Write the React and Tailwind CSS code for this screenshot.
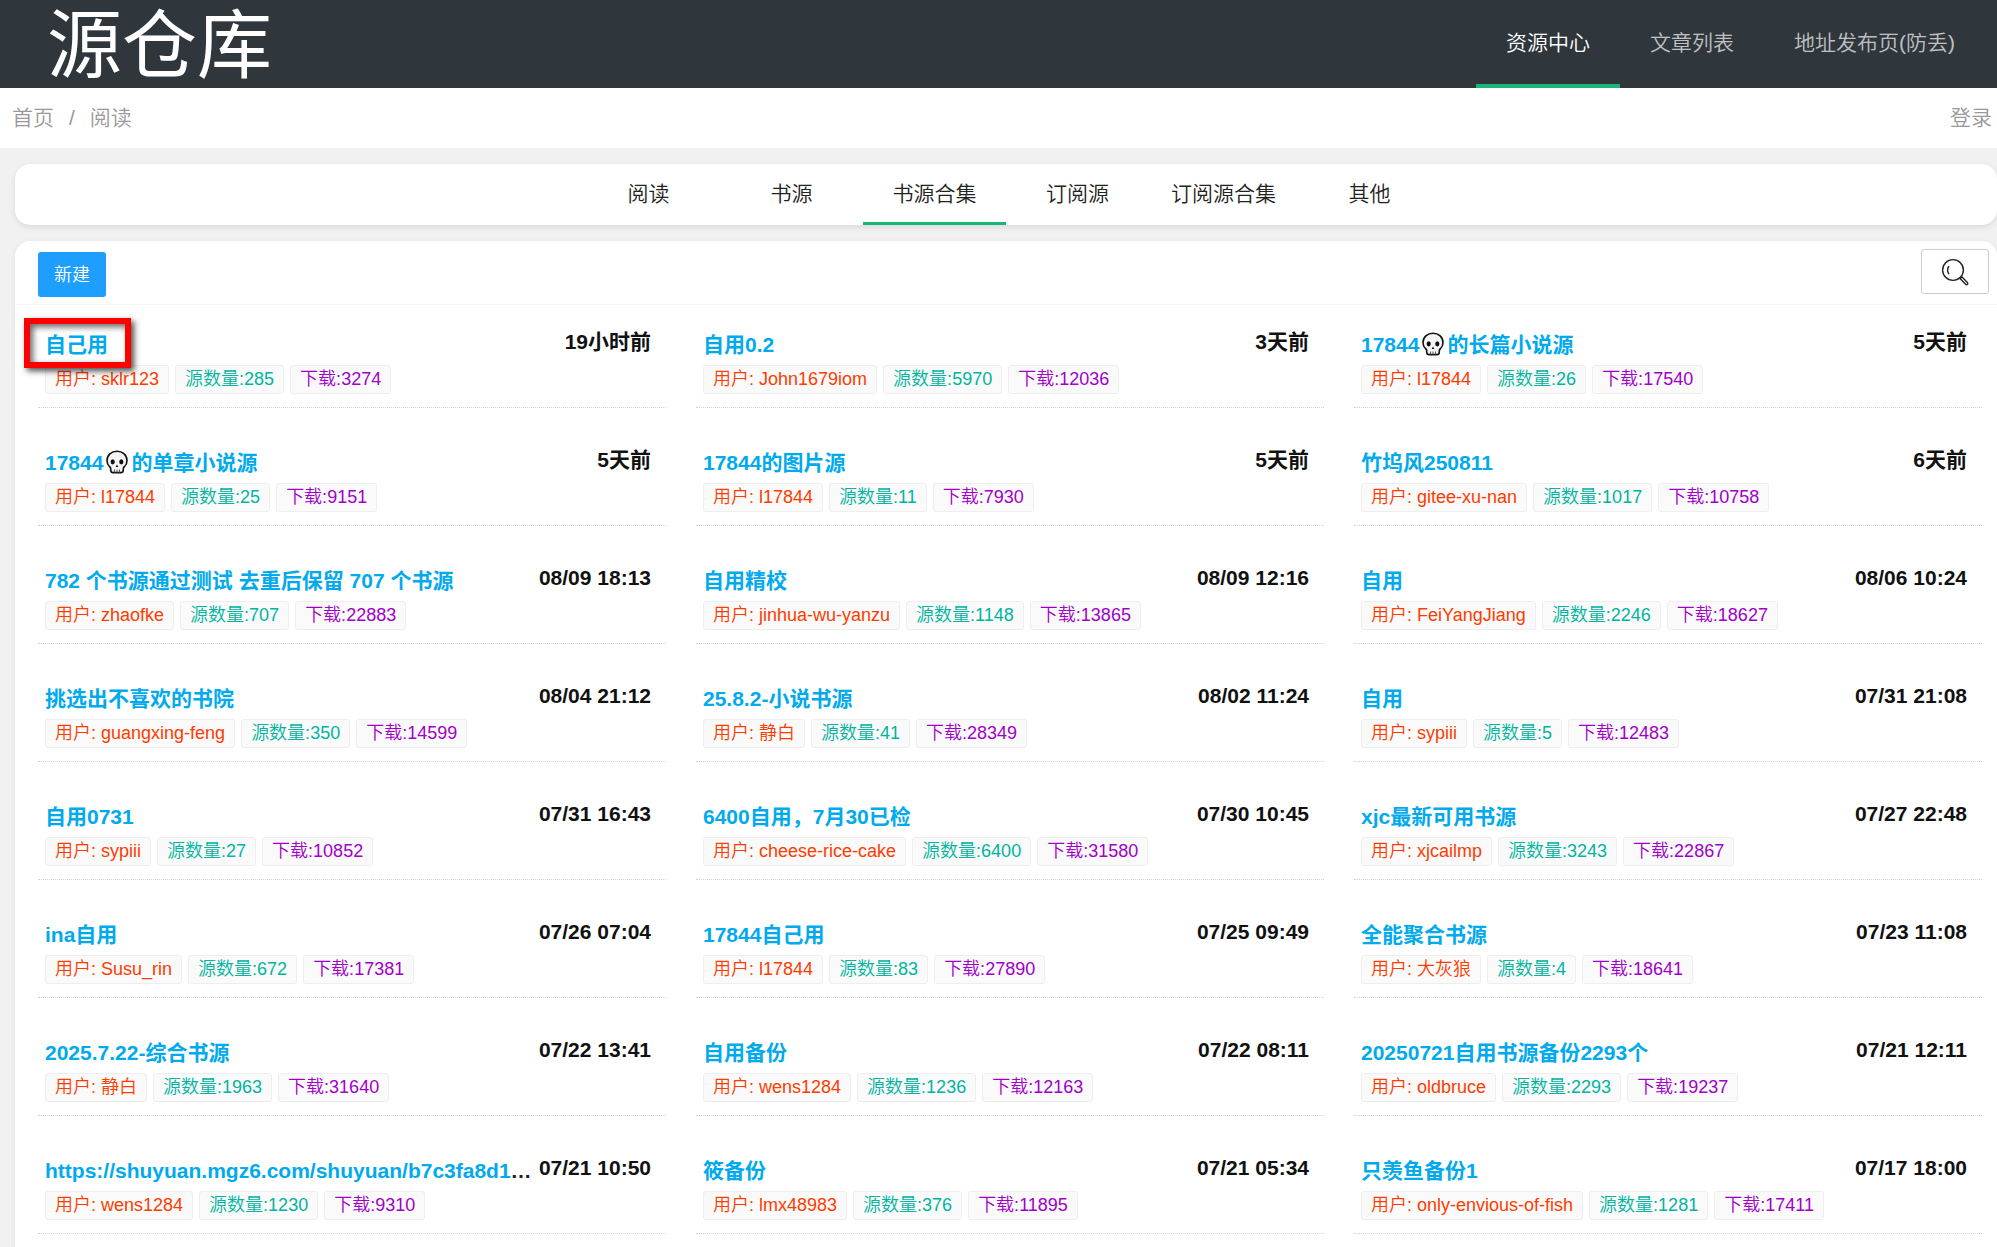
import React from 'react';

const navItems = [
    { label: '资源中心', active: true },
    { label: '文章列表' },
    { label: '地址发布页(防丢)' },
];

const tabs = ['阅读', '书源', '书源合集', '订阅源', '订阅源合集', '其他'];

const sources = [
    { title: '自己用', time: '19小时前', user: 'sklr123', count: 285, downloads: 3274, marked: true },
    { title: '自用0.2', time: '3天前', user: 'John1679iom', count: 5970, downloads: 12036 },
    { title: '17844💀的长篇小说源', time: '5天前', user: 'l17844', count: 26, downloads: 17540 },
    { title: '17844💀的单章小说源', time: '5天前', user: 'l17844', count: 25, downloads: 9151 },
    { title: '17844的图片源', time: '5天前', user: 'l17844', count: 11, downloads: 7930 },
    { title: '竹坞风250811', time: '6天前', user: 'gitee-xu-nan', count: 1017, downloads: 10758 },
    { title: '782 个书源通过测试 去重后保留 707 个书源', time: '08/09 18:13', user: 'zhaofke', count: 707, downloads: 22883 },
    { title: '自用精校', time: '08/09 12:16', user: 'jinhua-wu-yanzu', count: 1148, downloads: 13865 },
    { title: '自用', time: '08/06 10:24', user: 'FeiYangJiang', count: 2246, downloads: 18627 },
    { title: '挑选出不喜欢的书院', time: '08/04 21:12', user: 'guangxing-feng', count: 350, downloads: 14599 },
    { title: '25.8.2-小说书源', time: '08/02 11:24', user: '静白', count: 41, downloads: 28349 },
    { title: '自用', time: '07/31 21:08', user: 'sypiii', count: 5, downloads: 12483 },
    { title: '自用0731', time: '07/31 16:43', user: 'sypiii', count: 27, downloads: 10852 },
    { title: '6400自用，7月30已检', time: '07/30 10:45', user: 'cheese-rice-cake', count: 6400, downloads: 31580 },
    { title: 'xjc最新可用书源', time: '07/27 22:48', user: 'xjcailmp', count: 3243, downloads: 22867 },
    { title: 'ina自用', time: '07/26 07:04', user: 'Susu_rin', count: 672, downloads: 17381 },
    { title: '17844自己用', time: '07/25 09:49', user: 'l17844', count: 83, downloads: 27890 },
    { title: '全能聚合书源', time: '07/23 11:08', user: '大灰狼', count: 4, downloads: 18641 },
    { title: '2025.7.22-综合书源', time: '07/22 13:41', user: '静白', count: 1963, downloads: 31640 },
    { title: '自用备份', time: '07/22 08:11', user: 'wens1284', count: 1236, downloads: 12163 },
    { title: '20250721自用书源备份2293个', time: '07/21 12:11', user: 'oldbruce', count: 2293, downloads: 19237 },
    { title: 'https://shuyuan.mgz6.com/shuyuan/b7c3fa8d1e5f', time: '07/21 10:50', user: 'wens1284', count: 1230, downloads: 9310 },
    { title: '筱备份', time: '07/21 05:34', user: 'lmx48983', count: 376, downloads: 11895 },
    { title: '只羡鱼备份1', time: '07/17 18:00', user: 'only-envious-of-fish', count: 1281, downloads: 17411 },
];

function Skull() {
    return (
        <svg viewBox="0 0 24 24" className="inline-block w-6 h-6 mx-[2px] align-[-4px]" role="img" aria-label="💀">
            <path
                d="M12 1.2C6.2 1.2 2 5.2 2 10.6c0 3 .9 4.6 2.4 5.9.9.7 1.3 1.2 1.3 2.2v1.2c0 1.6 1 2.7 2.6 2.7h7.4c1.6 0 2.6-1.1 2.6-2.7v-1.2c0-1 .4-1.5 1.3-2.2 1.5-1.3 2.4-2.9 2.4-5.9 0-5.4-4.2-9.4-10-9.4z"
                fill="#f4f4f4" stroke="#111" strokeWidth="1.6"
            />
            <ellipse cx="7.7" cy="11.8" rx="2.1" ry="2.6" fill="#111" />
            <ellipse cx="16.3" cy="11.8" rx="2.1" ry="2.6" fill="#111" />
            <path d="M12 14.5l-1.3 2.5h2.6z" fill="#111" />
            <path d="M9.5 19.5v3M12 19.5v3M14.5 19.5v3" stroke="#555" strokeWidth="1" />
        </svg>
    );
}

function SearchIcon() {
    return (
        <svg viewBox="0 0 28 28" className="w-7 h-7" fill="none" stroke="#222" strokeWidth="1.4" aria-hidden="true">
            <circle cx="12" cy="12" r="10.4" />
            <path d="M7.7 8.5c-1.3 2-1.3 5 0 7.2" strokeLinecap="round" />
            <path d="M19.2 20.8l1.8-1.8 5.4 5.6c.5.6.5 1.2 0 1.7s-1.2.5-1.7 0z" strokeLinejoin="round" />
        </svg>
    );
}

function Title({ text }) {
    const parts = text.split('💀');
    return parts.map((part, i) => (
        <React.Fragment key={i}>
            {i > 0 && <Skull />}
            {part}
        </React.Fragment>
    ));
}

function SourceItem({ item }) {
    const tag = 'h-[29px] px-[9px] border border-[#eee] bg-[#fafafa] rounded-[3px] text-lg leading-[27px] whitespace-nowrap';
    return (
        <li className="h-[118px] px-[7px] pt-[37px] border-b border-dotted border-[#d2d2d2]">
            <div className="flex items-start justify-between h-[38px] text-[21px] leading-[30px] font-bold">
                <h2 className="relative min-w-0 pt-[3px]">
                    <div className="truncate">
                        <a href="#source" className="text-[#01aaed]"><Title text={item.title} /></a>
                    </div>
                    {item.marked && (
                        <span className="absolute -left-[21px] -top-[9px] w-[107px] h-[50px] border-6 border-[#f00] shadow-[3px_3px_6px_rgba(0,0,0,0.7),inset_3px_3px_6px_rgba(0,0,0,0.6)]" />
                    )}
                </h2>
                <time className="shrink-0 pl-1 pr-2 whitespace-nowrap text-[#111]">{item.time}</time>
            </div>
            <div className="flex gap-[6px]">
                <span className={`${tag} text-[#ff3c00]`}>用户: {item.user}</span>
                <span className={`${tag} text-[#00b5a0]`}>源数量:{item.count}</span>
                <span className={`${tag} text-[#a000c8]`}>下载:{item.downloads}</span>
            </div>
        </li>
    );
}

export default function App() {
    return (
        <div className="min-h-screen bg-[#f1f1f1] text-[21px] leading-[30px] font-[350] text-[#222] font-['Liberation_Sans','Noto_Sans_CJK_SC',sans-serif]">
            <header className="flex justify-between h-[88px] pl-[47px] pr-3 bg-[#2f363c]">
                <a href="#home" className="pt-1 text-[75px] leading-[84px] font-normal text-white">源仓库</a>
                <nav className="flex">
                    {navItems.map((item) => (
                        <a key={item.label} href="#nav"
                            className={`px-[30px] pt-[28px] border-b-4 ${item.active ? 'text-white border-[#16b777]' : 'text-white/70 border-transparent'}`}>
                            {item.label}
                        </a>
                    ))}
                </nav>
            </header>

            <div className="flex items-center justify-between h-[60px] pl-3 pr-[5px] bg-white text-[#999]">
                <div className="flex">
                    <a href="#home">首页</a>
                    <span className="px-[15px]">/</span>
                    <a href="#read">阅读</a>
                </div>
                <a href="#login">登录</a>
            </div>

            <main className="pl-[15px] pt-4">
                <nav className="flex justify-center h-[61px] pl-[6px] bg-white rounded-[15px] shadow-[0_2px_6px_rgba(0,0,0,0.1)]">
                    {tabs.map((tab) => (
                        <a key={tab} href="#tab"
                            className={`min-w-[143px] px-[22px] pt-[15px] text-center border-b-3 ${tab === '书源合集' ? 'border-[#16b777]' : 'border-transparent'}`}>
                            {tab}
                        </a>
                    ))}
                </nav>

                <section className="mt-4 bg-white rounded-t-[15px] shadow-[0_1px_5px_rgba(0,0,0,0.08)]">
                    <div className="flex items-start justify-between h-16 pt-2 pl-[23px] pr-2 border-b border-[#f6f6f6]">
                        <button type="button" className="mt-[3px] w-[68px] h-[45px] rounded-[3px] bg-[#1e9fff] text-lg text-white">新建</button>
                        <button type="button" aria-label="搜索" className="flex items-center justify-center w-[68px] h-[45px] rounded-[3px] border border-[#ccc] bg-white">
                            <SearchIcon />
                        </button>
                    </div>
                    <ul className="grid grid-cols-3 gap-x-[30px] pl-[23px] pr-[15px] pb-8 -mt-[15px]">
                        {sources.map((item, i) => <SourceItem key={i} item={item} />)}
                    </ul>
                </section>
            </main>
        </div>
    );
}
